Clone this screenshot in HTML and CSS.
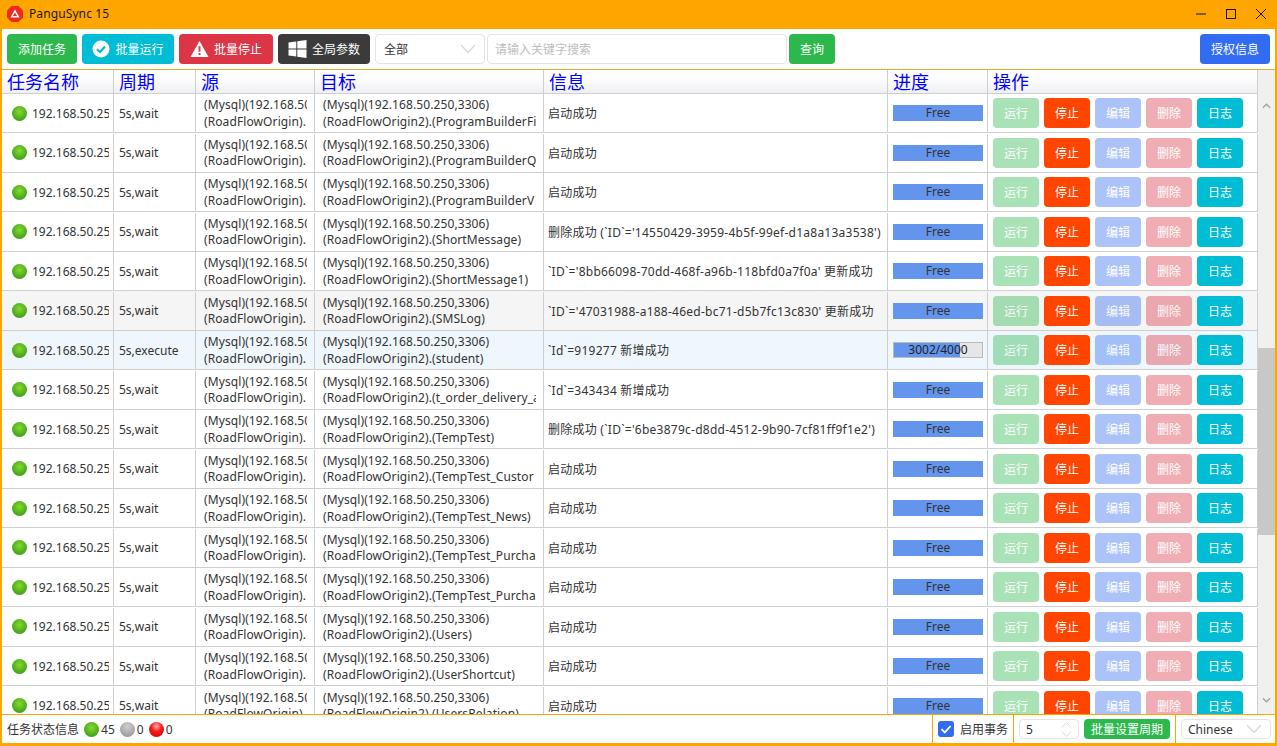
FILE: index.html
```html
<!DOCTYPE html>
<html>
<head>
    <meta charset="UTF-8">
    <link rel="stylesheet" href="styles.css">
</head>
<body>
<div class="window">
    <div class="titlebar">
        <svg class="app-logo" viewBox="0 0 16 16"><polygon points="4.5,0 11.5,0 16,4.5 16,11.5 11.5,16 4.5,16 0,11.5 0,4.5" fill="#ee2a1e"/><path d="M8 3.5 L12.6 11.4 H3.4 Z M8 6.6 L6 10 H10 Z" fill="#fff" fill-rule="evenodd"/></svg>
        <span class="app-title">PanguSync 15</span>
        <div class="win-controls">
            <svg viewBox="0 0 12 12"><path d="M1 6H11" stroke="#111" fill="none"/></svg>
            <svg viewBox="0 0 12 12"><rect x="1.5" y="1.5" width="9" height="9" stroke="#111" fill="none"/></svg>
            <svg viewBox="0 0 12 12"><path d="M1 1L11 11M11 1L1 11" stroke="#111" fill="none"/></svg>
        </div>
    </div>

    <div class="toolbar">
        <button class="btn btn-green w-add">添加任务</button>
        <button class="btn btn-cyan w-run"><svg class="btn-icon" viewBox="0 0 18 18"><circle cx="9" cy="9" r="8.5" fill="#fff"/><path d="M5 9.2L8 12L13 6.6" fill="none" stroke="#00bcd4" stroke-width="2.2"/></svg>批量运行</button>
        <button class="btn btn-red w-stop"><svg class="btn-icon btn-icon-lg" viewBox="0 0 20 18"><path d="M10 0.5L19.5 17.5H0.5Z" fill="#fff"/><path d="M9 6H11V12H9ZM9 13.2H11V15.2H9Z" fill="#dc3545"/></svg>批量停止</button>
        <button class="btn btn-dark w-param"><svg class="btn-icon btn-icon-lg" viewBox="0 0 18 18"><path d="M0 2.6L7.8 1.5V8.5H0ZM8.8 1.3L18 0V8.5H8.8ZM0 9.5H7.8V16.5L0 15.4ZM8.8 9.5H18V18L8.8 16.7Z" fill="#fff"/></svg>全局参数</button>
        <div class="select w-filter"><span>全部</span><svg class="chevron" viewBox="0 0 16 10"><path d="M1 1L8 8.5L15 1" fill="none" stroke="#d8d8d8" stroke-width="1.2"/></svg></div>
        <div class="search">请输入关键字搜索</div>
        <button class="btn btn-green w-query">查询</button>
        <button class="btn btn-blue w-license">授权信息</button>
    </div>

    <div class="grid-area">
        <div class="grid">
            <div class="row head">
                <div class="cell">任务名称</div><div class="cell">周期</div><div class="cell">源</div><div class="cell">目标</div><div class="cell">信息</div><div class="cell">进度</div><div class="cell">操作</div>
            </div>
            <div class="rows">
                <div class="row">
                    <div class="cell name"><i class="dot green"></i><span>192.168.50.25</span></div><div class="cell period">5s,wait</div>
                    <div class="cell db"><div>(Mysql)(192.168.50</div><div>(RoadFlowOrigin).</div></div>
                    <div class="cell db"><div>(Mysql)(192.168.50.250,3306)</div><div>(RoadFlowOrigin2).(ProgramBuilderFi</div></div>
                    <div class="cell info">启动成功</div>
                    <div class="cell prog"><div class="bar free">Free</div></div>
                    <div class="cell ops"><button class="op run">运行</button><button class="op stop">停止</button><button class="op edit">编辑</button><button class="op del">删除</button><button class="op log">日志</button></div>
                </div>
                <div class="row">
                    <div class="cell name"><i class="dot green"></i><span>192.168.50.25</span></div><div class="cell period">5s,wait</div>
                    <div class="cell db"><div>(Mysql)(192.168.50</div><div>(RoadFlowOrigin).</div></div>
                    <div class="cell db"><div>(Mysql)(192.168.50.250,3306)</div><div>(RoadFlowOrigin2).(ProgramBuilderQ</div></div>
                    <div class="cell info">启动成功</div>
                    <div class="cell prog"><div class="bar free">Free</div></div>
                    <div class="cell ops"><button class="op run">运行</button><button class="op stop">停止</button><button class="op edit">编辑</button><button class="op del">删除</button><button class="op log">日志</button></div>
                </div>
                <div class="row">
                    <div class="cell name"><i class="dot green"></i><span>192.168.50.25</span></div><div class="cell period">5s,wait</div>
                    <div class="cell db"><div>(Mysql)(192.168.50</div><div>(RoadFlowOrigin).</div></div>
                    <div class="cell db"><div>(Mysql)(192.168.50.250,3306)</div><div>(RoadFlowOrigin2).(ProgramBuilderV</div></div>
                    <div class="cell info">启动成功</div>
                    <div class="cell prog"><div class="bar free">Free</div></div>
                    <div class="cell ops"><button class="op run">运行</button><button class="op stop">停止</button><button class="op edit">编辑</button><button class="op del">删除</button><button class="op log">日志</button></div>
                </div>
                <div class="row">
                    <div class="cell name"><i class="dot green"></i><span>192.168.50.25</span></div><div class="cell period">5s,wait</div>
                    <div class="cell db"><div>(Mysql)(192.168.50</div><div>(RoadFlowOrigin).</div></div>
                    <div class="cell db"><div>(Mysql)(192.168.50.250,3306)</div><div>(RoadFlowOrigin2).(ShortMessage)</div></div>
                    <div class="cell info">删除成功 (`ID`='14550429-3959-4b5f-99ef-d1a8a13a3538')</div>
                    <div class="cell prog"><div class="bar free">Free</div></div>
                    <div class="cell ops"><button class="op run">运行</button><button class="op stop">停止</button><button class="op edit">编辑</button><button class="op del">删除</button><button class="op log">日志</button></div>
                </div>
                <div class="row">
                    <div class="cell name"><i class="dot green"></i><span>192.168.50.25</span></div><div class="cell period">5s,wait</div>
                    <div class="cell db"><div>(Mysql)(192.168.50</div><div>(RoadFlowOrigin).</div></div>
                    <div class="cell db"><div>(Mysql)(192.168.50.250,3306)</div><div>(RoadFlowOrigin2).(ShortMessage1)</div></div>
                    <div class="cell info">`ID`='8bb66098-70dd-468f-a96b-118bfd0a7f0a' 更新成功</div>
                    <div class="cell prog"><div class="bar free">Free</div></div>
                    <div class="cell ops"><button class="op run">运行</button><button class="op stop">停止</button><button class="op edit">编辑</button><button class="op del">删除</button><button class="op log">日志</button></div>
                </div>
                <div class="row hover">
                    <div class="cell name"><i class="dot green"></i><span>192.168.50.25</span></div><div class="cell period">5s,wait</div>
                    <div class="cell db"><div>(Mysql)(192.168.50</div><div>(RoadFlowOrigin).</div></div>
                    <div class="cell db"><div>(Mysql)(192.168.50.250,3306)</div><div>(RoadFlowOrigin2).(SMSLog)</div></div>
                    <div class="cell info">`ID`='47031988-a188-46ed-bc71-d5b7fc13c830' 更新成功</div>
                    <div class="cell prog"><div class="bar free">Free</div></div>
                    <div class="cell ops"><button class="op run">运行</button><button class="op stop">停止</button><button class="op edit">编辑</button><button class="op del">删除</button><button class="op log">日志</button></div>
                </div>
                <div class="row active">
                    <div class="cell name"><i class="dot green"></i><span>192.168.50.25</span></div><div class="cell period">5s,execute</div>
                    <div class="cell db"><div>(Mysql)(192.168.50</div><div>(RoadFlowOrigin).</div></div>
                    <div class="cell db"><div>(Mysql)(192.168.50.250,3306)</div><div>(RoadFlowOrigin2).(student)</div></div>
                    <div class="cell info">`Id`=919277 新增成功</div>
                    <div class="cell prog"><div class="bar busy"><div class="bar-fill" style="width: 75%"></div><span>3002/4000</span></div></div>
                    <div class="cell ops"><button class="op run">运行</button><button class="op stop">停止</button><button class="op edit">编辑</button><button class="op del">删除</button><button class="op log">日志</button></div>
                </div>
                <div class="row">
                    <div class="cell name"><i class="dot green"></i><span>192.168.50.25</span></div><div class="cell period">5s,wait</div>
                    <div class="cell db"><div>(Mysql)(192.168.50</div><div>(RoadFlowOrigin).</div></div>
                    <div class="cell db"><div>(Mysql)(192.168.50.250,3306)</div><div>(RoadFlowOrigin2).(t_order_delivery_a</div></div>
                    <div class="cell info">`Id`=343434 新增成功</div>
                    <div class="cell prog"><div class="bar free">Free</div></div>
                    <div class="cell ops"><button class="op run">运行</button><button class="op stop">停止</button><button class="op edit">编辑</button><button class="op del">删除</button><button class="op log">日志</button></div>
                </div>
                <div class="row">
                    <div class="cell name"><i class="dot green"></i><span>192.168.50.25</span></div><div class="cell period">5s,wait</div>
                    <div class="cell db"><div>(Mysql)(192.168.50</div><div>(RoadFlowOrigin).</div></div>
                    <div class="cell db"><div>(Mysql)(192.168.50.250,3306)</div><div>(RoadFlowOrigin2).(TempTest)</div></div>
                    <div class="cell info">删除成功 (`ID`='6be3879c-d8dd-4512-9b90-7cf81ff9f1e2')</div>
                    <div class="cell prog"><div class="bar free">Free</div></div>
                    <div class="cell ops"><button class="op run">运行</button><button class="op stop">停止</button><button class="op edit">编辑</button><button class="op del">删除</button><button class="op log">日志</button></div>
                </div>
                <div class="row">
                    <div class="cell name"><i class="dot green"></i><span>192.168.50.25</span></div><div class="cell period">5s,wait</div>
                    <div class="cell db"><div>(Mysql)(192.168.50</div><div>(RoadFlowOrigin).</div></div>
                    <div class="cell db"><div>(Mysql)(192.168.50.250,3306)</div><div>(RoadFlowOrigin2).(TempTest_Custor</div></div>
                    <div class="cell info">启动成功</div>
                    <div class="cell prog"><div class="bar free">Free</div></div>
                    <div class="cell ops"><button class="op run">运行</button><button class="op stop">停止</button><button class="op edit">编辑</button><button class="op del">删除</button><button class="op log">日志</button></div>
                </div>
                <div class="row">
                    <div class="cell name"><i class="dot green"></i><span>192.168.50.25</span></div><div class="cell period">5s,wait</div>
                    <div class="cell db"><div>(Mysql)(192.168.50</div><div>(RoadFlowOrigin).</div></div>
                    <div class="cell db"><div>(Mysql)(192.168.50.250,3306)</div><div>(RoadFlowOrigin2).(TempTest_News)</div></div>
                    <div class="cell info">启动成功</div>
                    <div class="cell prog"><div class="bar free">Free</div></div>
                    <div class="cell ops"><button class="op run">运行</button><button class="op stop">停止</button><button class="op edit">编辑</button><button class="op del">删除</button><button class="op log">日志</button></div>
                </div>
                <div class="row">
                    <div class="cell name"><i class="dot green"></i><span>192.168.50.25</span></div><div class="cell period">5s,wait</div>
                    <div class="cell db"><div>(Mysql)(192.168.50</div><div>(RoadFlowOrigin).</div></div>
                    <div class="cell db"><div>(Mysql)(192.168.50.250,3306)</div><div>(RoadFlowOrigin2).(TempTest_Purcha</div></div>
                    <div class="cell info">启动成功</div>
                    <div class="cell prog"><div class="bar free">Free</div></div>
                    <div class="cell ops"><button class="op run">运行</button><button class="op stop">停止</button><button class="op edit">编辑</button><button class="op del">删除</button><button class="op log">日志</button></div>
                </div>
                <div class="row">
                    <div class="cell name"><i class="dot green"></i><span>192.168.50.25</span></div><div class="cell period">5s,wait</div>
                    <div class="cell db"><div>(Mysql)(192.168.50</div><div>(RoadFlowOrigin).</div></div>
                    <div class="cell db"><div>(Mysql)(192.168.50.250,3306)</div><div>(RoadFlowOrigin2).(TempTest_Purcha</div></div>
                    <div class="cell info">启动成功</div>
                    <div class="cell prog"><div class="bar free">Free</div></div>
                    <div class="cell ops"><button class="op run">运行</button><button class="op stop">停止</button><button class="op edit">编辑</button><button class="op del">删除</button><button class="op log">日志</button></div>
                </div>
                <div class="row">
                    <div class="cell name"><i class="dot green"></i><span>192.168.50.25</span></div><div class="cell period">5s,wait</div>
                    <div class="cell db"><div>(Mysql)(192.168.50</div><div>(RoadFlowOrigin).</div></div>
                    <div class="cell db"><div>(Mysql)(192.168.50.250,3306)</div><div>(RoadFlowOrigin2).(Users)</div></div>
                    <div class="cell info">启动成功</div>
                    <div class="cell prog"><div class="bar free">Free</div></div>
                    <div class="cell ops"><button class="op run">运行</button><button class="op stop">停止</button><button class="op edit">编辑</button><button class="op del">删除</button><button class="op log">日志</button></div>
                </div>
                <div class="row">
                    <div class="cell name"><i class="dot green"></i><span>192.168.50.25</span></div><div class="cell period">5s,wait</div>
                    <div class="cell db"><div>(Mysql)(192.168.50</div><div>(RoadFlowOrigin).</div></div>
                    <div class="cell db"><div>(Mysql)(192.168.50.250,3306)</div><div>(RoadFlowOrigin2).(UserShortcut)</div></div>
                    <div class="cell info">启动成功</div>
                    <div class="cell prog"><div class="bar free">Free</div></div>
                    <div class="cell ops"><button class="op run">运行</button><button class="op stop">停止</button><button class="op edit">编辑</button><button class="op del">删除</button><button class="op log">日志</button></div>
                </div>
                <div class="row">
                    <div class="cell name"><i class="dot green"></i><span>192.168.50.25</span></div><div class="cell period">5s,wait</div>
                    <div class="cell db"><div>(Mysql)(192.168.50</div><div>(RoadFlowOrigin).</div></div>
                    <div class="cell db"><div>(Mysql)(192.168.50.250,3306)</div><div>(RoadFlowOrigin2).(UsersRelation)</div></div>
                    <div class="cell info">启动成功</div>
                    <div class="cell prog"><div class="bar free">Free</div></div>
                    <div class="cell ops"><button class="op run">运行</button><button class="op stop">停止</button><button class="op edit">编辑</button><button class="op del">删除</button><button class="op log">日志</button></div>
                </div>
            </div>
        </div>
        <div class="scrollbar">
            <svg class="sb-arrow" viewBox="0 0 10 6"><path d="M1 5L5 1L9 5" fill="none" stroke="#a0a0a0" stroke-width="1.4"/></svg>
            <div class="sb-track"><div class="sb-thumb"></div></div>
            <svg class="sb-arrow" viewBox="0 0 10 6"><path d="M1 1L5 5L9 1" fill="none" stroke="#a0a0a0" stroke-width="1.4"/></svg>
        </div>
    </div>

    <div class="statusbar">
        <div class="status-info">
            <span>任务状态信息</span>
            <i class="dot green"></i><span class="count">45</span>
            <i class="dot gray"></i><span class="count">0</span>
            <i class="dot red"></i><span class="count">0</span>
        </div>
        <div class="status-sec sec-check">
            <span class="checkbox"><svg viewBox="0 0 16 16"><path d="M3.5 8.2L6.8 11.4L12.6 5" fill="none" stroke="#fff" stroke-width="1.8"/></svg></span>
            <span>启用事务</span>
        </div>
        <div class="status-sec sec-period">
            <div class="spin"><span>5</span><svg viewBox="0 0 11 17"><path d="M1 6.5L5.5 1.5L10 6.5M1 10.5L5.5 15.5L10 10.5" fill="none" stroke="#d8d8d8"/></svg></div>
            <button class="btn btn-green btn-small">批量设置周期</button>
        </div>
        <div class="status-sec sec-lang">
            <div class="select lang"><span>Chinese</span><svg class="chevron" viewBox="0 0 16 10"><path d="M1 1L8 8.5L15 1" fill="none" stroke="#d8d8d8" stroke-width="1.2"/></svg></div>
        </div>
    </div>
</div>
</body>
</html>
```

FILE: styles.css
```css
:root {
    --orange: #ffa500;
    --line: #cfcfcf;
    --green: #2db84d;
    --cyan: #00bcd4;
    --red: #dc3545;
    --blue: #326cf3;
}

* {
    margin: 0;
    padding: 0;
    box-sizing: border-box;
}

body {
    width: 1277px;
    height: 746px;
    overflow: hidden;
    font-family: "Noto Sans", "Noto Sans CJK SC", sans-serif;
    font-size: 12px;
    color: #333;
    background: #fff;
}

.window {
    height: 746px;
    display: flex;
    flex-direction: column;
    border-left: 2px solid var(--orange);
    border-right: 2px solid var(--orange);
    border-bottom: 3px solid var(--orange);
}

/* Title bar */
.titlebar {
    height: 29px;
    margin: 0 -2px;
    padding-left: 7px;
    display: flex;
    align-items: center;
    background: var(--orange);
    flex-shrink: 0;
}

.app-logo {
    width: 16px;
    height: 16px;
    margin-top: -1px;
}

.app-title {
    margin-left: 6px;
    font-size: 12px;
    letter-spacing: 0.1px;
    color: #1a1a1a;
    margin-top: -2px;
}

.win-controls {
    margin-left: auto;
    display: flex;
    align-items: center;
    margin-top: -1px;
}

.win-controls svg {
    width: 12px;
    height: 12px;
    margin-right: 18px;
}

.win-controls svg:last-child {
    margin-right: 10px;
}

/* Toolbar */
.toolbar {
    height: 41px;
    padding: 5px 5px 0;
    display: flex;
    align-items: flex-start;
    flex-shrink: 0;
    border-bottom: 1px solid #f0a830;
}

.btn {
    height: 30px;
    border: none;
    border-radius: 4px;
    color: #fff;
    font-family: inherit;
    font-size: 12px;
    display: inline-flex;
    align-items: center;
    justify-content: center;
}

.btn-green { background: var(--green); }
.btn-cyan { background: var(--cyan); }
.btn-red { background: var(--red); }
.btn-dark { background: #3b3b3b; }
.btn-blue { background: var(--blue); }

.btn-icon {
    width: 18px;
    height: 18px;
    margin-right: 5px;
}

.btn-icon-lg {
    width: 19px;
}

.w-add { width: 70px; }
.w-run { width: 92px; margin-left: 5px; }
.w-stop { width: 94px; margin-left: 5px; }
.w-param { width: 92px; margin-left: 5px; }
.w-query { width: 46px; margin-left: 2px; }
.w-license { width: 70px; margin-left: auto; }

.select {
    display: flex;
    align-items: center;
    justify-content: space-between;
    border: 1px solid #e4e4e4;
    border-radius: 4px;
    background: #fff;
    color: #333;
}

.w-filter {
    width: 110px;
    height: 30px;
    margin-left: 5px;
    padding: 0 8px;
}

.chevron {
    width: 16px;
    height: 10px;
}

.search {
    width: 300px;
    height: 30px;
    margin-left: 2px;
    padding: 0 7px;
    display: flex;
    align-items: center;
    border: 1px solid #e4e4e4;
    border-radius: 4px;
    color: #bdbdbd;
}

/* Task table */
.grid-area {
    flex: 1;
    min-height: 0;
    display: flex;
}

.grid {
    width: 1256px;
    display: flex;
    flex-direction: column;
    min-height: 0;
}

.rows {
    flex: 1;
    min-height: 0;
    margin-top: -0.5px;
    overflow: hidden;
}

.row {
    display: grid;
    grid-template-columns: 112px 82px 119px 229px 344px 100px 270px;
    height: 39.5px;
    padding-top: 0.5px;
    border-bottom: 1px solid var(--line);
}

.row.head {
    height: 24px;
    padding-top: 0;
    flex-shrink: 0;
    background: linear-gradient(#fff 30%, #eff0f3);
}

.row.hover {
    background: #f5f5f5;
}

.row.active {
    background: #eff7fd;
}

.cell {
    display: flex;
    align-items: center;
    min-width: 0;
    overflow: hidden;
    white-space: nowrap;
    border-right: 1px solid var(--line);
}

.head .cell {
    padding-left: 5px;
    font-size: 18px;
    line-height: 24px;
    color: #0000ff;
}

.name {
    padding: 0 4px 0 10px;
}

.name span {
    margin-left: 5px;
    overflow: hidden;
}

.period {
    padding-left: 5px;
}

.db {
    display: block;
    align-self: stretch;
    padding: 3px 7px 0 8px;
    line-height: 16.5px;
    letter-spacing: 0.1px;
}

.db div {
    overflow: hidden;
}

.info {
    padding-left: 4px;
    letter-spacing: 0.25px;
}

.prog {
    padding-left: 5px;
}

.bar {
    position: relative;
    width: 90px;
    height: 16px;
    line-height: 16px;
    text-align: center;
    color: #333;
}

.bar.free {
    background: #6495ed;
}

.bar.busy {
    background: #e6e6e6;
    border: 1px solid #bbb;
    line-height: 14px;
    color: #222;
}

.bar-fill {
    position: absolute;
    top: 0;
    bottom: 0;
    left: 0;
    background: #6495ed;
}

.bar.busy span {
    position: relative;
}

.ops {
    padding-left: 5px;
    gap: 5px;
}

.op {
    width: 46px;
    height: 30px;
    flex-shrink: 0;
    border: none;
    border-radius: 4px;
    color: #fff;
    font-family: inherit;
    font-size: 12px;
}

.op.run { background: var(--green); opacity: 0.4; }
.op.stop { background: #ff4500; }
.op.edit { background: var(--blue); opacity: 0.4; }
.op.del { background: var(--red); opacity: 0.4; }
.op.log { background: var(--cyan); }

.dot {
    display: inline-block;
    width: 15px;
    height: 15px;
    flex-shrink: 0;
    border-radius: 50%;
}

.dot.green {
    background: radial-gradient(circle at 50% 38%, #86d92f 0%, #55b41f 50%, #348a1a 100%);
}

.dot.gray {
    background: radial-gradient(circle at 50% 30%, #cfcfcf 0%, #aaa 55%, #8c8c8c 100%);
}

.dot.red {
    background: radial-gradient(circle at 50% 28%, #ffb0b0 0%, #f51c1c 40%, #c80000 100%);
}

/* Scrollbar */
.scrollbar {
    width: 17px;
    display: flex;
    flex-direction: column;
    background: #f0f0f0;
}

.sb-arrow {
    width: 9px;
    height: 6px;
    margin: 33px 4px 0;
    flex-shrink: 0;
}

.sb-arrow:last-child {
    margin: 0 4px 11px;
}

.sb-track {
    flex: 1;
    padding-top: 239px;
}

.sb-thumb {
    height: 187px;
    background: #c8c8c8;
}

/* Status bar */
.statusbar {
    height: 29px;
    flex-shrink: 0;
    display: flex;
    border-top: 1px solid var(--orange);
    position: relative;
    background: #fff;
}

.status-info {
    flex: 1;
    display: flex;
    align-items: center;
    padding-left: 5px;
}

.status-info .dot {
    margin-left: 5px;
}

.count {
    margin-left: 2px;
}

.status-sec {
    display: flex;
    align-items: center;
    border-left: 1px solid var(--orange);
}

.sec-check {
    width: 81px;
    padding-left: 5px;
}

.checkbox {
    width: 16px;
    height: 16px;
    margin-right: 6px;
    border-radius: 3px;
    background: var(--blue);
}

.checkbox svg {
    display: block;
}

.sec-period {
    width: 162px;
    padding-left: 5px;
}

.spin {
    width: 60px;
    height: 20px;
    padding: 0 6px;
    display: flex;
    align-items: center;
    justify-content: space-between;
    border: 1px solid #e4e4e4;
    border-radius: 4px;
}

.spin svg {
    width: 11px;
    height: 17px;
}

.btn-small {
    width: 86px;
    height: 20px;
    margin-left: 5px;
}

.sec-lang {
    width: 100px;
    padding-left: 5px;
}

.lang {
    width: 90px;
    height: 20px;
    padding: 0 6px;
}

.lang .chevron {
    margin-right: 2px;
}
```
